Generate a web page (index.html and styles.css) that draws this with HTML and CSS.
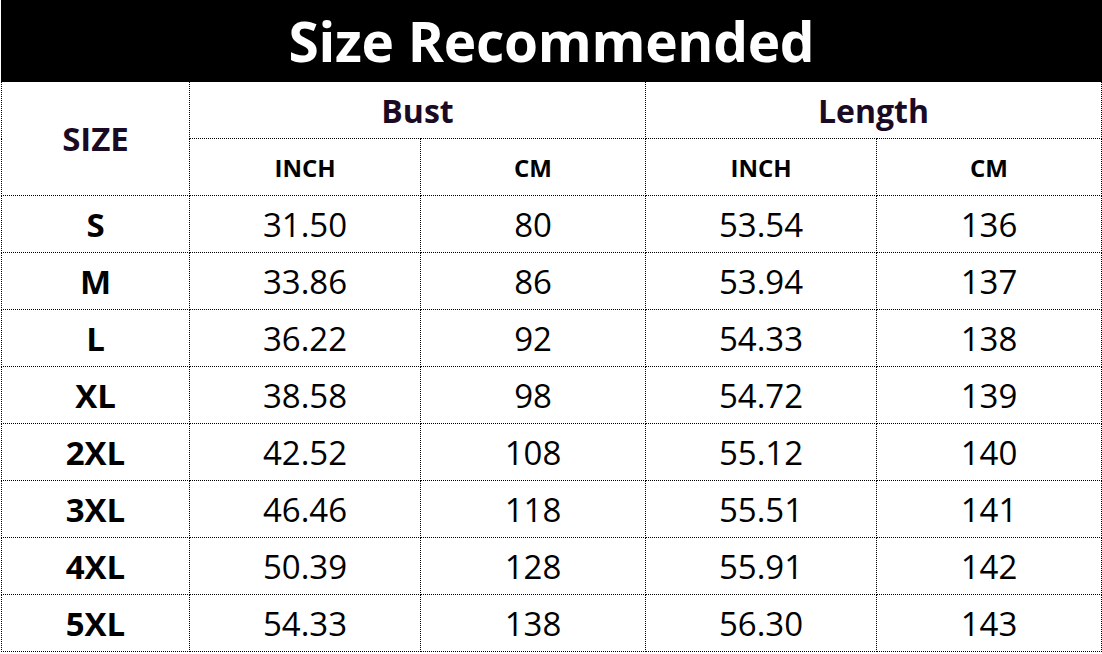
FILE: index.html
```html
<!DOCTYPE html>
<html>
<head>
<meta charset="utf-8">
<link rel="stylesheet" href="styles.css">
</head>
<body>
<div class="chart">
  <div class="title">Size Recommended</div>
  <table class="grid">
    <colgroup>
      <col class="c-size"><col class="c-a"><col class="c-b"><col class="c-a"><col class="c-b">
    </colgroup>
    <thead>
      <tr class="h1">
        <th rowspan="2" class="size-head">SIZE</th>
        <th colspan="2" class="group">Bust</th>
        <th colspan="2" class="group">Length</th>
      </tr>
      <tr class="h2">
        <th class="unit">INCH</th><th class="unit">CM</th><th class="unit">INCH</th><th class="unit">CM</th>
      </tr>
    </thead>
    <tbody>
      <tr><th>S</th><td>31.50</td><td>80</td><td>53.54</td><td>136</td></tr>
      <tr><th>M</th><td>33.86</td><td>86</td><td>53.94</td><td>137</td></tr>
      <tr><th>L</th><td>36.22</td><td>92</td><td>54.33</td><td>138</td></tr>
      <tr><th>XL</th><td>38.58</td><td>98</td><td>54.72</td><td>139</td></tr>
      <tr><th>2XL</th><td>42.52</td><td>108</td><td>55.12</td><td>140</td></tr>
      <tr><th>3XL</th><td>46.46</td><td>118</td><td>55.51</td><td>141</td></tr>
      <tr><th>4XL</th><td>50.39</td><td>128</td><td>55.91</td><td>142</td></tr>
      <tr><th>5XL</th><td>54.33</td><td>138</td><td>56.30</td><td>143</td></tr>
    </tbody>
  </table>
</div>
</body>
</html>
```
FILE: styles.css
```css
html, body {
  margin: 0;
  padding: 0;
  background: #fff;
}
.chart {
  width: 1101px;
  padding-left: 1px;
  font-family: "Open Sans", "Noto Sans", sans-serif;
}
.title {
  height: 82px;
  background: #000;
  color: #fff;
  font-weight: 700;
  font-size: 55px;
  line-height: 82px;
  text-align: center;
  letter-spacing: -0.3px;
}
.grid {
  border-collapse: collapse;
  table-layout: fixed;
  width: 1100px;
}
.c-size { width: 188px; }
.c-a { width: 231px; }
.c-b { width: 225px; }
.grid th, .grid td {
  border: 1px dotted #000;
  padding: 0;
  text-align: center;
  height: 56px;
}
.grid tr:first-child th { border-top: none; }
.size-head {
  color: #1a0a24;
  font-size: 33px;
  font-weight: 700;
}
.group {
  color: #1a0a24;
  font-size: 32px;
  font-weight: 700;
}
.unit {
  font-size: 24px;
  font-weight: 700;
  color: #000;
}
.grid tbody th {
  font-size: 33px;
  font-weight: 700;
  color: #000;
}
.grid tbody td {
  font-size: 33px;
  font-weight: 400;
  color: #000;
}
```
